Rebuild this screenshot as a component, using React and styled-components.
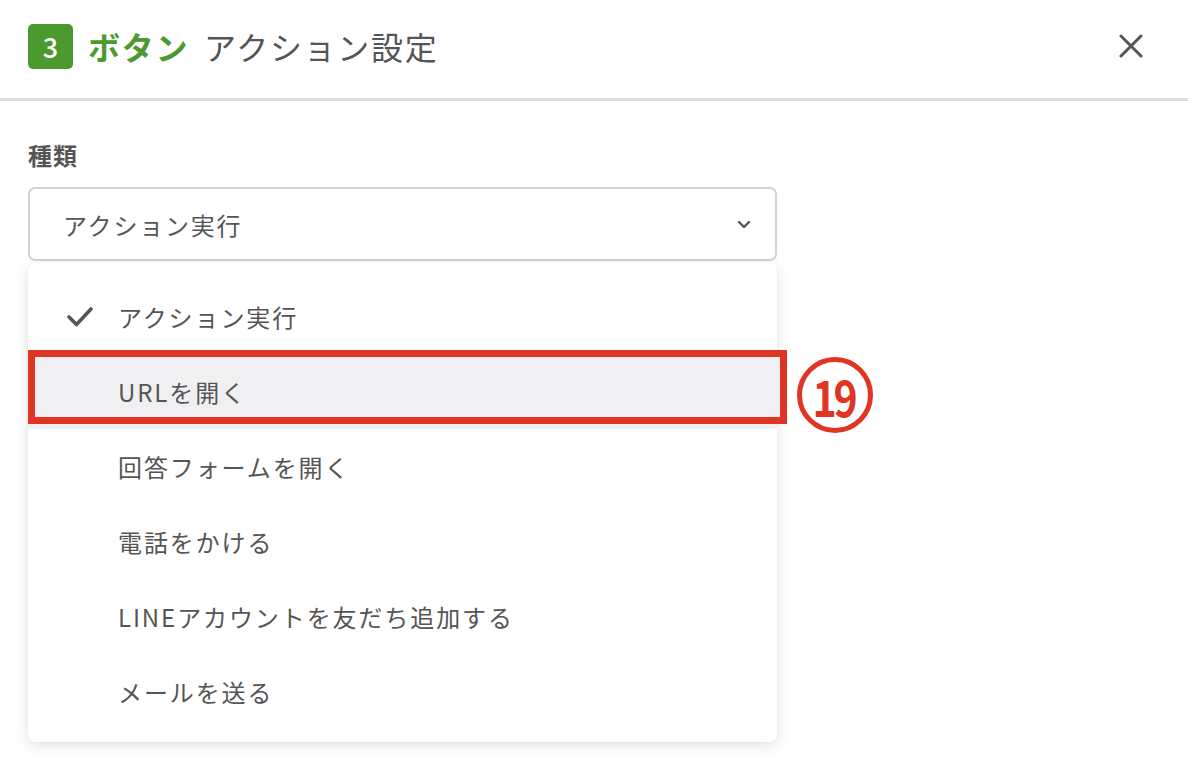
import React from 'react';
import styled, { createGlobalStyle } from 'styled-components';

const GlobalStyle = createGlobalStyle`
  html, body {
    margin: 0;
    padding: 0;
    background: #ffffff;
  }
  body {
    font-family: "Noto Sans CJK JP", "Noto Sans", sans-serif;
    color: #555555;
  }
`;

const Page = styled.div`
  width: 1188px;
  height: 770px;
  overflow: hidden;
  background: #fff;
`;

const Header = styled.header`
  display: flex;
  align-items: center;
  height: 101px;
  padding: 0 28px 6px;
  border-bottom: 3px solid #dddddd;
  box-sizing: border-box;
`;

const StepBadge = styled.span`
  display: flex;
  align-items: center;
  justify-content: center;
  width: 45px;
  height: 45px;
  border-radius: 5px;
  background: #4a9a2f;
  color: #fff;
  font-size: 27px;
  font-weight: 500;
  margin-right: 15px;
`;

const Title = styled.h1`
  margin: 0;
  font-size: 32px;
  font-weight: 400;
  letter-spacing: 1.7px;
  color: #555;
  flex: 1;
  line-height: 1;
`;

const TitleAccent = styled.span`
  color: #4a9a2f;
  font-weight: 700;
  margin-right: 15px;
`;

const CloseButton = styled.button`
  border: none;
  background: none;
  padding: 0;
  margin-right: 14px;
  width: 30px;
  height: 30px;
  display: flex;
  align-items: center;
  justify-content: center;
  cursor: pointer;
`;

const Body = styled.div`
  padding: 38px 28px 0;
`;

const Label = styled.div`
  font-size: 24px;
  font-weight: 700;
  letter-spacing: 1px;
  color: #555;
  line-height: 32px;
  margin-bottom: 16px;
`;

const Field = styled.div`
  position: relative;
  width: 749px;
`;

const SelectBox = styled.div`
  display: flex;
  align-items: center;
  justify-content: space-between;
  height: 74px;
  box-sizing: border-box;
  padding: 0 24px 0 33px;
  border: 2px solid #d2d2d2;
  border-radius: 7px;
  font-size: 24px;
  letter-spacing: 1.8px;
  color: #555;
`;

const Menu = styled.ul`
  list-style: none;
  margin: 2px 0 0;
  padding: 16px 0 13px;
  background: #fff;
  border-radius: 7px;
  box-shadow: 0 4px 14px rgba(0, 0, 0, 0.12), 0 0 2px rgba(0, 0, 0, 0.06);
`;

const Item = styled.li`
  position: relative;
  display: flex;
  align-items: center;
  height: 75px;
  padding-left: 90px;
  font-size: 24px;
  letter-spacing: 1.9px;
  color: #555;
  background: ${p => (p.$active ? '#f0f0f2' : 'transparent')};
`;

const Check = styled.span`
  position: absolute;
  left: 38px;
  top: 50%;
  transform: translateY(-50%);
  display: flex;
`;

const Highlight = styled.span`
  position: absolute;
  left: 0;
  right: -10px;
  top: -4px;
  bottom: 5px;
  border: 7px solid #e03424;
  pointer-events: none;
`;

const Marker = styled.span`
  position: absolute;
  left: calc(100% + 20px);
  top: 3px;
  width: 76px;
  height: 76px;
  box-sizing: border-box;
  border: 5px solid #e03424;
  border-radius: 50%;
  display: flex;
  align-items: center;
  justify-content: center;
  color: #e03424;
  line-height: 1;
`;

const MarkerNumber = styled.span`
  display: block;
  font-size: 50px;
  font-weight: 700;
  letter-spacing: -4px;
  margin-left: -4px;
  transform: scaleX(0.82);
`;

const options = [
  'アクション実行',
  'URLを開く',
  '回答フォームを開く',
  '電話をかける',
  'LINEアカウントを友だち追加する',
  'メールを送る',
];

export default function App() {
  const selected = 0;
  const hovered = 1;

  return (
    <Page>
      <GlobalStyle />
      <Header>
        <StepBadge>3</StepBadge>
        <Title>
          <TitleAccent>ボタン</TitleAccent>アクション設定
        </Title>
        <CloseButton aria-label="閉じる">
          <svg width="24" height="24" viewBox="0 0 24 24">
            <path d="M2 2L22 22M22 2L2 22" stroke="#555" strokeWidth="3" strokeLinecap="round" />
          </svg>
        </CloseButton>
      </Header>

      <Body>
        <Label>種類</Label>
        <Field>
          <SelectBox>
            <span>{options[selected]}</span>
            <svg width="14" height="9" viewBox="0 0 14 9">
              <path d="M2 2L7 7L12 2" fill="none" stroke="#555" strokeWidth="2.4" strokeLinecap="round" strokeLinejoin="round" />
            </svg>
          </SelectBox>
          <Menu>
            {options.map((opt, i) => (
              <Item key={opt} $active={i === hovered}>
                {i === selected && (
                  <Check>
                    <svg width="28" height="22" viewBox="0 0 28 22">
                      <path d="M3 11L10.5 18.5L25 3" fill="none" stroke="#555" strokeWidth="3.6" strokeLinecap="round" strokeLinejoin="round" />
                    </svg>
                  </Check>
                )}
                {opt}
                {i === hovered && (
                  <>
                    <Highlight />
                    <Marker>
                      <MarkerNumber>19</MarkerNumber>
                    </Marker>
                  </>
                )}
              </Item>
            ))}
          </Menu>
        </Field>
      </Body>
    </Page>
  );
}
